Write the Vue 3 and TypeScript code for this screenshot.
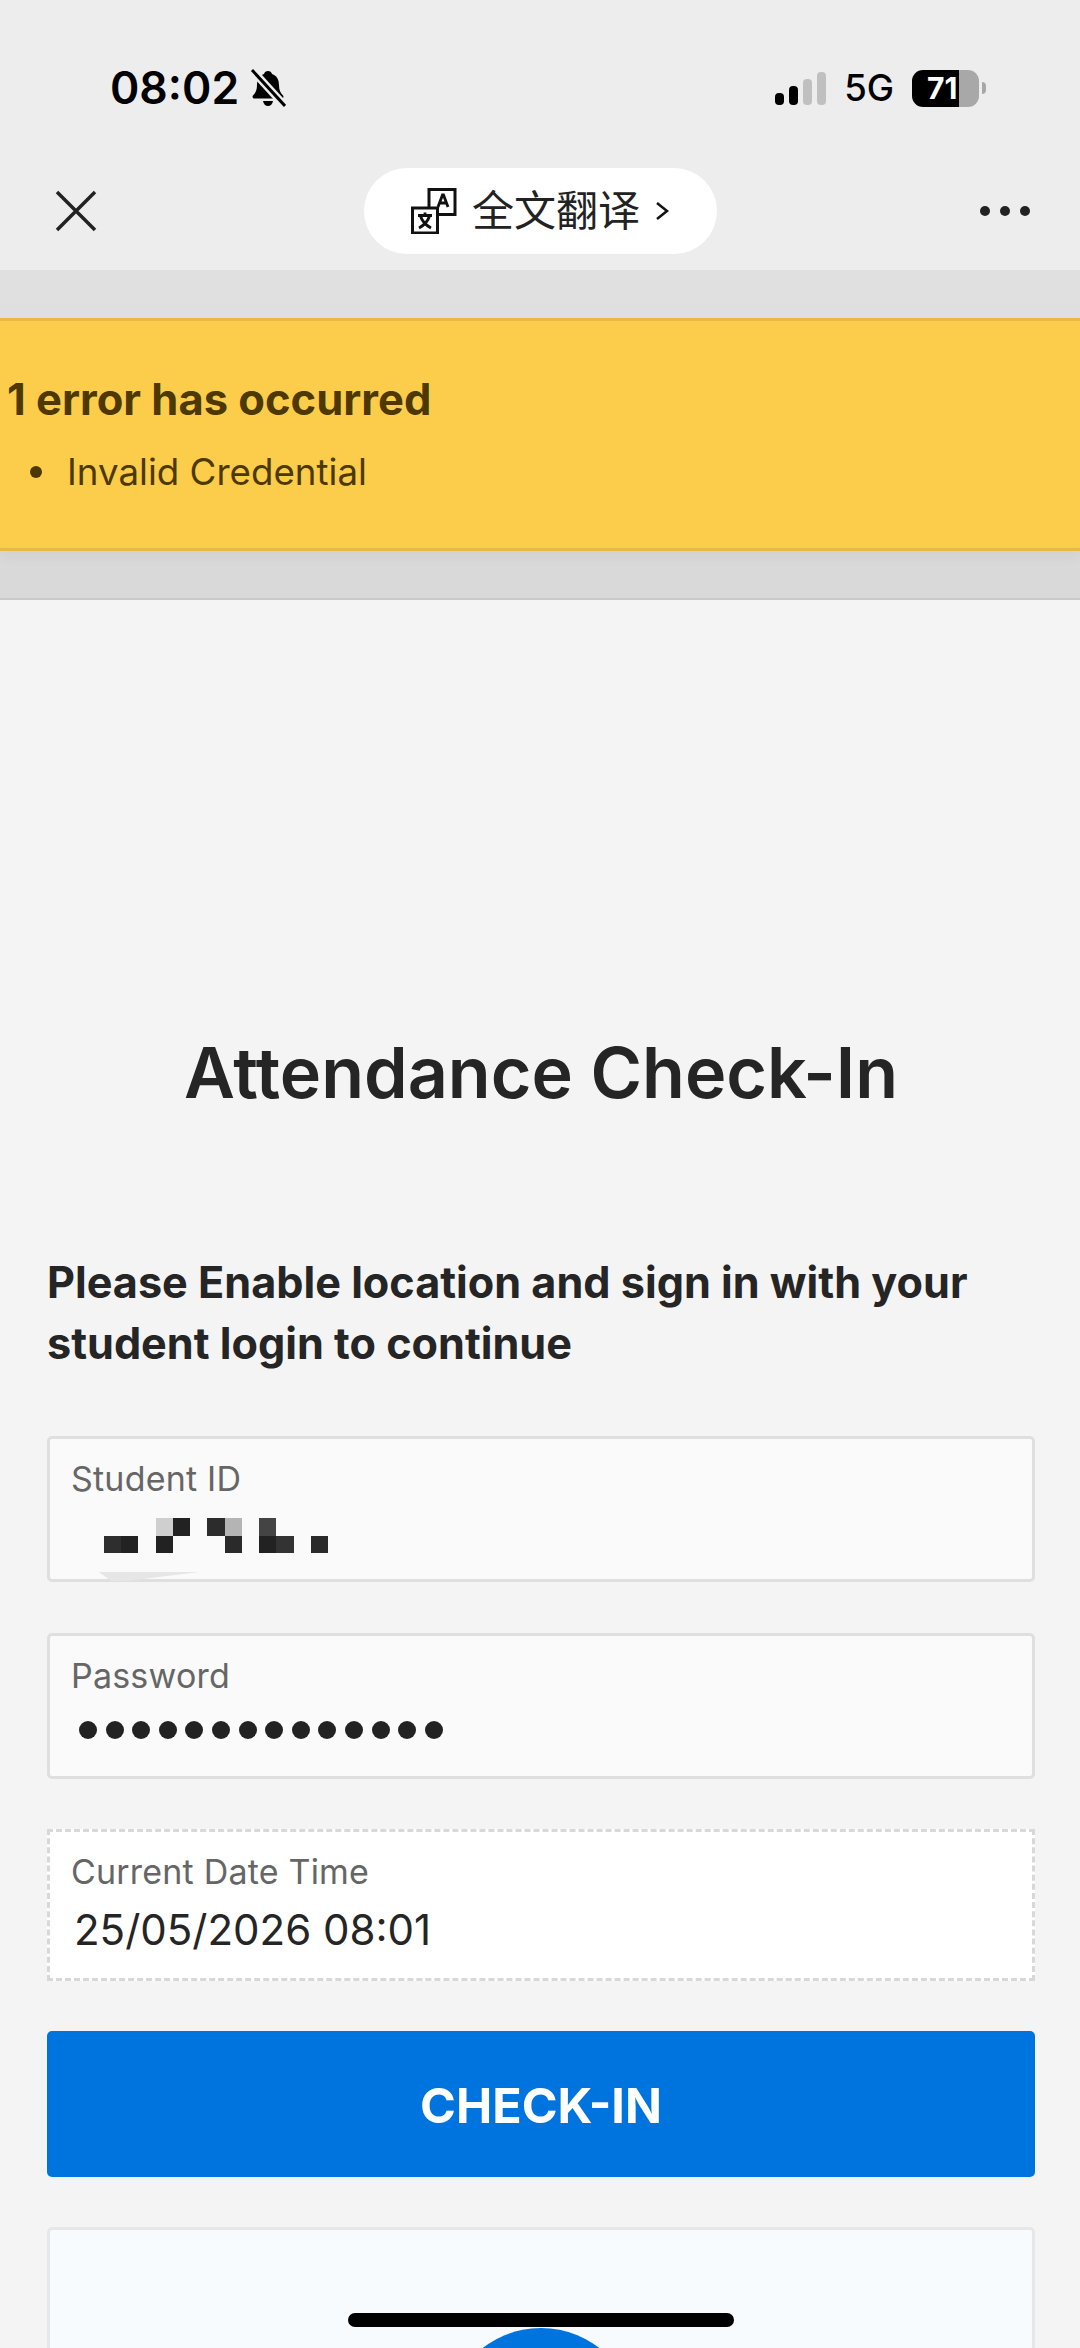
<script setup lang="ts">
const passwordDots = Array.from({ length: 14 }, (_, i) => i)

// blurred-out student id, in mosaic cells
const mosaic = [
  { x: 0, y: 1, fill: '#2e2e2e' },
  { x: 1, y: 1, fill: '#222' },
  { x: 3, y: 0, fill: '#cfcfcf' },
  { x: 3, y: 1, fill: '#222' },
  { x: 4, y: 0, fill: '#222' },
  { x: 6, y: 0, fill: '#2c2c2c' },
  { x: 7, y: 0, fill: '#b4b4b4' },
  { x: 7, y: 1, fill: '#2a2a2a' },
  { x: 9, y: 0, fill: '#444' },
  { x: 9, y: 1, fill: '#222' },
  { x: 10, y: 1, fill: '#333' },
  { x: 12, y: 1, fill: '#2a2a2a' },
]
</script>

<template>
  <div class="page">
    <header class="top">
      <div class="status">
        <div class="status__left">
          <span class="time">08:02</span>
          <svg class="bell" viewBox="0 0 36 38" aria-hidden="true">
            <path d="M18 2c2 0 3.500 1.300 4 3 5 1.500 7 6 7 11 0 5 1.500 8 4 10.500 1 1.200.3 3-1.500 3H4.500C2.700 29.500 2 27.700 3 26.500 5.500 24 7 21 7 16c0-5 2-9.500 7-11 .5-1.700 2-3 4-3z" />
            <path d="M13 32h10c-.5 3-2.500 5-5 5s-4.500-2-5-5z" />
            <path d="M2 1l33 36" class="bell__cut" />
            <path d="M2 1l33 36" class="bell__slash" />
          </svg>
        </div>
        <div class="status__right">
          <div class="signal">
            <i class="signal__bar signal__bar--1"></i>
            <i class="signal__bar signal__bar--2"></i>
            <i class="signal__bar signal__bar--3"></i>
            <i class="signal__bar signal__bar--4"></i>
          </div>
          <span class="net">5G</span>
          <div class="battery">
            <div class="battery__fill"><span>71</span></div>
            <i class="battery__tip"></i>
          </div>
        </div>
      </div>
      <nav class="nav">
        <svg class="nav__close" viewBox="0 0 42 42" aria-hidden="true">
          <path d="M2 2l38 38M40 2L2 40" />
        </svg>
        <button type="button" class="pill">
          <svg class="pill__icon" viewBox="0 0 46 46" aria-hidden="true">
            <rect x="18" y="1.500" width="26" height="25" class="pill__box" />
            <rect x="1.500" y="20" width="25" height="25" class="pill__box pill__box--front" />
            <path d="M27 19l4.500-12h1l4.500 12M28.500 15h7" class="pill__glyph" />
            <path d="M7 27.500h14M14 24.500v3M9.500 28c1.500 5 5 9 10.500 12M18.500 28c-1.500 5-5 9-10.500 12" class="pill__glyph" />
          </svg>
          <span class="pill__text">全文翻译</span>
          <svg class="pill__chevron" viewBox="0 0 14 20" aria-hidden="true">
            <path d="M2 2l10 8-10 8" />
          </svg>
        </button>
        <div class="nav__more">
          <i></i><i></i><i></i>
        </div>
      </nav>
    </header>

    <section class="alert-band">
      <div class="alert">
        <h2 class="alert__title">1 error has occurred</h2>
        <ul class="alert__list">
          <li>Invalid Credential</li>
        </ul>
      </div>
    </section>

    <main class="main">
      <h1 class="title">Attendance Check-In</h1>
      <p class="lead">Please Enable location and sign in with your student login to continue</p>

      <div class="field">
        <label class="field__label">Student ID</label>
        <svg class="mosaic" viewBox="0 0 13 2" aria-hidden="true" shape-rendering="crispEdges">
          <rect
            v-for="c in mosaic"
            :key="`${c.x}-${c.y}`"
            :x="c.x"
            :y="c.y"
            width="1"
            height="1"
            :fill="c.fill"
          />
        </svg>
        <svg class="smudge" viewBox="0 0 100 10" aria-hidden="true">
          <path d="M0 0h100L28 9H12z" />
        </svg>
      </div>

      <div class="field field--password">
        <label class="field__label">Password</label>
        <div class="dots">
          <i v-for="d in passwordDots" :key="d"></i>
        </div>
      </div>

      <div class="field field--readonly">
        <label class="field__label">Current Date Time</label>
        <div class="field__value">25/05/2026 08:01</div>
      </div>

      <button type="button" class="submit">CHECK-IN</button>

      <div class="card">
        <div class="card__circle"></div>
      </div>
    </main>

    <div class="home-bar"></div>
  </div>
</template>

<style>
html,
body {
  margin: 0;
  background: #f4f4f4;
}
</style>

<style scoped>
.page {
  position: relative;
  width: 1080px;
  height: 2348px;
  overflow: hidden;
  background: #f4f4f4;
  font-family: Inter, "Noto Sans CJK SC", sans-serif;
  color: #252525;
}

.top {
  height: 270px;
  background: #ededed;
}

.status {
  display: flex;
  justify-content: space-between;
  align-items: center;
  height: 168px;
  padding: 8px 94px 0 110px;
  box-sizing: border-box;
  color: #000;
}

.status__left {
  display: flex;
  align-items: center;
  gap: 11px;
}

.time {
  font-size: 44.500px;
  font-weight: 600;
  line-height: 1;
}

.bell {
  width: 36px;
  height: 38px;
}

.bell path {
  fill: #000;
}

.bell .bell__cut {
  fill: none;
  stroke: #ededed;
  stroke-width: 8;
}

.bell .bell__slash {
  fill: none;
  stroke: #000;
  stroke-width: 3;
}

.status__right {
  display: flex;
  align-items: center;
}

.signal {
  display: flex;
  align-items: flex-end;
  gap: 5px;
  height: 33px;
  margin-right: 18px;
}

.signal__bar {
  display: block;
  width: 9px;
  border-radius: 4px;
  background: #000;
}

.signal__bar--1 {
  height: 12px;
}

.signal__bar--2 {
  height: 19px;
}

.signal__bar--3 {
  height: 26px;
  background: #c0c0c0;
}

.signal__bar--4 {
  height: 33px;
  background: #c0c0c0;
}

.net {
  font-size: 36.500px;
  font-weight: 500;
  line-height: 1;
  margin-right: 18px;
}

.battery {
  display: flex;
  align-items: center;
  gap: 3px;
}

.battery__fill {
  width: 67px;
  height: 37px;
  border-radius: 11px;
  overflow: hidden;
  background: linear-gradient(to right, #000 47px, #a8a8a8 47px);
}

.battery__fill span {
  display: block;
  width: 47px;
  overflow: hidden;
  padding-left: 15px;
  box-sizing: border-box;
  color: #fff;
  font-size: 30px;
  font-weight: 700;
  line-height: 37px;
  white-space: nowrap;
}

.battery__tip {
  display: block;
  width: 4px;
  height: 12px;
  border-radius: 0 4px 4px 0;
  background: #a8a8a8;
}

.nav {
  display: flex;
  justify-content: space-between;
  align-items: center;
  height: 86px;
  padding: 0 50px 0 55px;
}

.nav__close {
  width: 42px;
  height: 42px;
}

.nav__close path {
  fill: none;
  stroke: #222;
  stroke-width: 3.500;
}

.pill {
  display: flex;
  align-items: center;
  width: 353px;
  height: 86px;
  margin-left: 4px;
  padding: 0 0 0 47px;
  box-sizing: border-box;
  border: 0;
  border-radius: 43px;
  background: #fff;
  color: #222;
  font-family: inherit;
}

.pill__icon {
  width: 46px;
  height: 46px;
  margin-right: 15px;
}

.pill__box {
  fill: #fff;
  stroke: #111;
  stroke-width: 3;
}

.pill__glyph {
  fill: none;
  stroke: #111;
  stroke-width: 2.800;
}

.pill__text {
  font-size: 42px;
  line-height: 1;
  white-space: nowrap;
}

.pill__chevron {
  width: 14px;
  height: 20px;
  margin-left: 15px;
}

.pill__chevron path {
  fill: none;
  stroke: #111;
  stroke-width: 2.500;
}

.nav__more {
  display: flex;
  gap: 10px;
}

.nav__more i {
  display: block;
  width: 10px;
  height: 10px;
  border-radius: 50%;
  background: #222;
}

.alert-band {
  height: 330px;
  padding: 48px 0;
  box-sizing: border-box;
  background: linear-gradient(#e0e0e0, #d9d9d9);
  border-bottom: 2px solid #c9c9c9;
}

.alert {
  height: 233px;
  box-sizing: border-box;
  padding: 53px 7px 0;
  background: #fbcd4a;
  border-top: 3px solid #e6ba45;
  border-bottom: 3px solid #e6ba45;
  box-shadow: 0 8px 12px rgba(0, 0, 0, 0.04);
  color: #4d3900;
}

.alert__title {
  margin: 0;
  font-size: 43.500px;
  font-weight: 700;
  line-height: 50px;
}

.alert__list {
  margin: 23px 0 0;
  padding: 0 0 0 60px;
  list-style: none;
  font-size: 36.700px;
  line-height: 50px;
}

.alert__list li {
  position: relative;
}

.alert__list li::before {
  content: "";
  position: absolute;
  left: -37px;
  top: 19px;
  width: 12px;
  height: 12px;
  border-radius: 50%;
  background: currentColor;
}

.main {
  padding: 430px 45px 0 47px;
}

.title {
  margin: 0;
  font-size: 70px;
  font-weight: 600;
  line-height: 86px;
  text-align: center;
}

.lead {
  margin: 136px 0 62px;
  font-size: 43.200px;
  font-weight: 650;
  line-height: 61px;
}

.field {
  position: relative;
  height: 146px;
  margin-bottom: 51px;
  padding: 20px 21px 0;
  box-sizing: border-box;
  border: 3px solid #dfdfdf;
  border-radius: 5px;
  background: #fafafa;
}

.field--password {
  margin-bottom: 50px;
}

.field__label {
  display: block;
  color: #666;
  font-size: 34px;
  letter-spacing: 0.2px;
  line-height: 40px;
}

.mosaic {
  display: block;
  width: 224px;
  height: 35px;
  margin: 19px 0 0 33px;
}

.smudge {
  position: absolute;
  left: 49px;
  bottom: -3px;
  width: 100px;
  height: 10px;
}

.smudge path {
  fill: #e6e6e6;
}

.dots {
  display: flex;
  gap: 8.600px;
  margin: 25px 0 0 8px;
}

.dots i {
  display: block;
  width: 18px;
  height: 18px;
  border-radius: 50%;
  background: #222;
}

.field--readonly {
  height: 152px;
  margin-bottom: 50px;
  border: 3px dashed #d8d8d8;
  border-radius: 0;
  background: #fff;
}

.field__value {
  margin: 13px 0 0 3px;
  font-size: 42px;
  line-height: 50px;
  color: #252525;
}

.submit {
  display: block;
  width: 100%;
  height: 146px;
  padding-top: 3px;
  border: 0;
  border-radius: 5px;
  background: #0074de;
  color: #fff;
  font-family: inherit;
  font-size: 48.500px;
  font-weight: 700;
}

.card {
  display: flex;
  justify-content: center;
  height: 300px;
  margin-top: 50px;
  padding-top: 98px;
  box-sizing: border-box;
  border: 3px solid #e5e7ea;
  border-radius: 5px;
  background: #f8fbfe;
}

.card__circle {
  width: 190px;
  height: 190px;
  border-radius: 50%;
  background: #0074de;
}

.home-bar {
  position: absolute;
  left: 348px;
  bottom: 21px;
  width: 386px;
  height: 14px;
  border-radius: 7px;
  background: #000;
}
</style>
